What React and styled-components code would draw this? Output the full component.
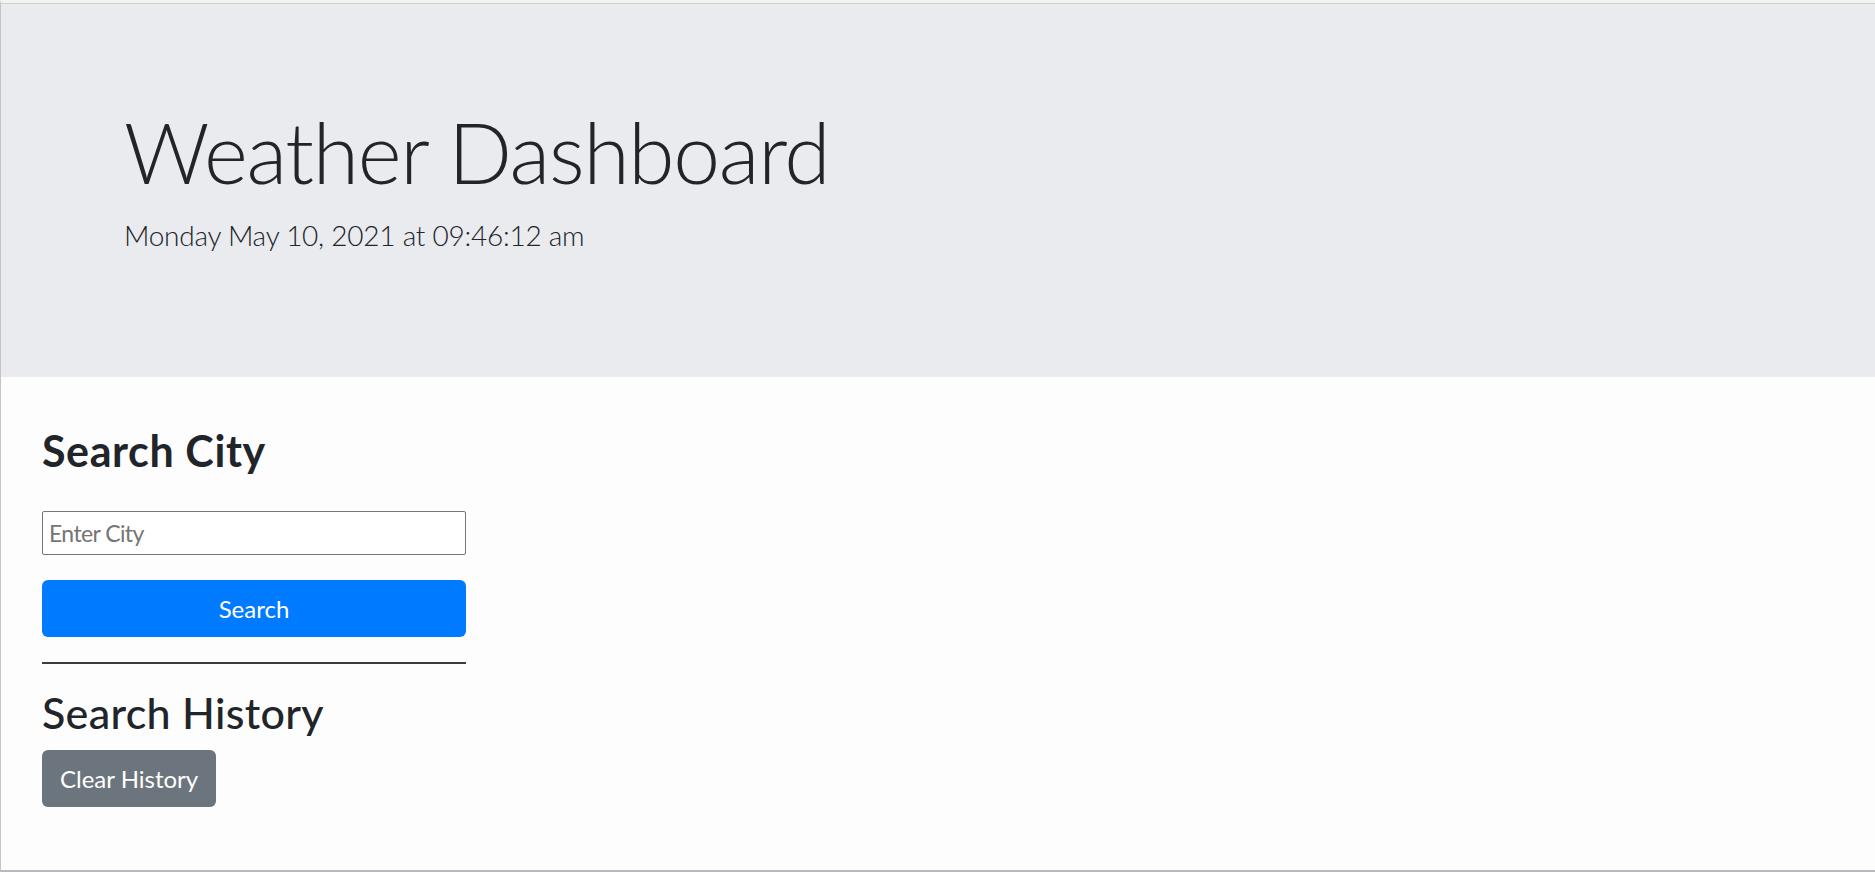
import React from "react";
import styled, {createGlobalStyle} from "styled-components";

const Global = createGlobalStyle`

  html, body {
    margin: 0;
    padding: 0;
    background: #fdfdfd;
  }

  body {
    font-family: Lato, "Open Sans", "Liberation Sans", sans-serif;
    color: #212529;
  }

`

const Frame = styled.div`

  box-sizing: border-box;
  height: 872px;
  border-top: 3px solid #f3f3f3;
  border-left: 1px solid #c4c4c4;
  border-bottom: 2px solid #b9b9bd;
  display: flex;
  flex-direction: column;
  overflow: hidden;

`

const Jumbotron = styled.header`

  box-sizing: border-box;
  height: 374px;
  border-top: 1px solid #cfcfcf;
  background: #e9ebef;
  padding: 106px 0 0 123px;

`

const Title = styled.h1`

  margin: 0;
  font-size: 84px;
  font-weight: 300;
  letter-spacing: -1.3px;
  line-height: 1;
  color: #212529;

`

const Lead = styled.p`

  margin: 27px 0 0;
  font-size: 28px;
  font-weight: 300;
  letter-spacing: -0.25px;
  line-height: 1;
  color: #212529;

`

const Sidebar = styled.section`

  width: 424px;
  padding: 52px 0 0 41px;
  display: flex;
  flex-direction: column;

`

const Heading = styled.h2`

  margin: 0;
  font-size: 43px;
  font-weight: ${p => p.$bold ? 700 : 500};
  letter-spacing: ${p => p.$bold ? "0.6px" : "0.3px"};
  line-height: 1;
  color: #212529;

`

const CityInput = styled.input`

  box-sizing: border-box;
  margin-top: 39px;
  width: 100%;
  height: 44px;
  border: 1px solid #767676;
  border-radius: 2px;
  padding: 0 6px;
  font-family: inherit;
  font-size: 23px;
  letter-spacing: -0.6px;
  color: #212529;
  background: #fff;

  &::placeholder {
    color: #757575;
  }

`

const Button = styled.button`

  box-sizing: border-box;
  height: 57px;
  border: none;
  border-radius: 6px;
  background: ${p => p.$variant === "secondary" ? "#6c757d" : "#007bff"};
  color: #fff;
  font-family: inherit;
  font-size: 24px;
  line-height: 1;
  cursor: pointer;
  width: ${p => p.$block ? "100%" : "auto"};
  padding: 0 18px;
  align-self: flex-start;

`

const Divider = styled.hr`

  width: 100%;
  margin: 25px 0 27px;
  border: none;
  border-top: 2px solid #3a3a40;

`

const Spacer = styled.div`

  height: ${p => p.$h}px;

`

export default function App() {

    return (

        <Frame>

            <Global/>

            <Jumbotron>

                <Title>Weather Dashboard</Title>

                <Lead>Monday May 10, 2021 at 09:46:12 am</Lead>

            </Jumbotron>

            <Sidebar>

                <Heading $bold>Search City</Heading>

                <CityInput placeholder="Enter City"/>

                <Spacer $h={25}/>

                <Button $block>Search</Button>

                <Divider/>

                <Heading>Search History</Heading>

                <Spacer $h={16}/>

                <Button $variant="secondary">Clear History</Button>

            </Sidebar>

        </Frame>

    );

}
